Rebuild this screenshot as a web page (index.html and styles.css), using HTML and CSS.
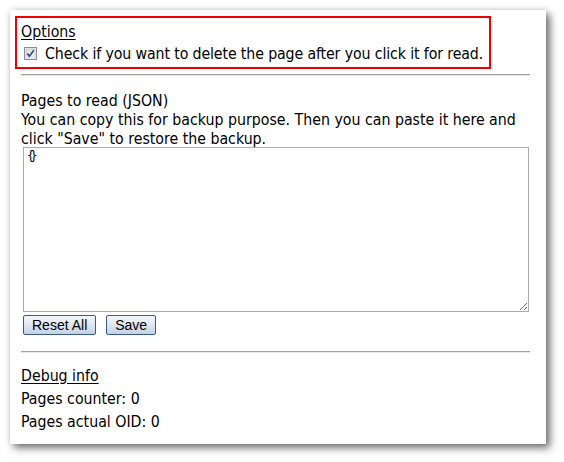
FILE: index.html
```html
<!DOCTYPE html>
<html>
<head>
<meta charset="utf-8">
<link rel="stylesheet" href="styles.css">
</head>
<body>
<div class="panel">
  <div class="options">
    <div class="title">Options</div>
    <label class="check-row">
      <svg class="cb" width="13" height="13" viewBox="0 0 13 13">
        <defs>
          <linearGradient id="cbg" x1="0" y1="0" x2="1" y2="1">
            <stop offset="0" stop-color="#d9dbdd"/>
            <stop offset="1" stop-color="#fbfbfb"/>
          </linearGradient>
        </defs>
        <rect x="0.5" y="0.5" width="12" height="12" fill="#f4f4f4" stroke="#8f8f8f"/>
        <rect x="2" y="2" width="9" height="9" fill="url(#cbg)" stroke="#b8bcc2" stroke-width="0.6"/>
        <path d="M3.3 6.4 L5.4 9.2 L9.8 3.2" fill="none" stroke="#2a4f9c" stroke-width="1.7" stroke-linejoin="round"/>
      </svg>
      <span class="check-text">Check if you want to delete the page after you click it for read.</span>
    </label>
  </div>
  <hr class="sep">
  <div class="pages">
    <div>Pages to read (JSON)</div>
    <div>You can copy this for backup purpose. Then you can paste it here and click "Save" to restore the backup.</div>
    <textarea class="json">{}</textarea>
    <div class="buttons">
      <button class="btn">Reset All</button>
      <button class="btn">Save</button>
    </div>
  </div>
  <hr class="sep sep2">
  <div class="debug">
    <div class="title">Debug info</div>
    <div>Pages counter: 0</div>
    <div>Pages actual OID: 0</div>
  </div>
</div>
</body>
</html>
```
FILE: styles.css
```css
html, body {
  margin: 0;
  padding: 0;
  background: #ffffff;
}
body {
  width: 564px;
  height: 462px;
  overflow: hidden;
}
.panel {
  box-sizing: border-box;
  margin: 10px 0 0 10px;
  width: 536px;
  height: 434px;
  background: #ffffff;
  box-shadow: 4px 4px 8px rgba(0, 0, 0, 0.55), 0 0 6px rgba(0, 0, 0, 0.12);
  padding: 12px 16px 0 11px;
  font-family: "DejaVu Sans Condensed", "DejaVu Sans", sans-serif;
  font-stretch: condensed;
  font-size: 15.75px;
  line-height: 19px;
  color: #000;
}
.options {
  width: 464px;
  outline: 2px solid #ee0000;
  outline-offset: 4px;
}
.title {
  text-decoration: underline;
  text-underline-offset: 2px;
}
.check-row {
  display: flex;
  align-items: center;
  margin-top: 3px;
  white-space: nowrap;
}
.check-text {
  letter-spacing: -0.12px;
}
.cb {
  margin: 0 8px 0 3px;
  flex: none;
}
.sep {
  margin: 11px 0 0 0;
  border: 0;
  height: 0;
  border-top: 1px solid #a0a0a0;
  border-bottom: 1px solid #e6e6e6;
}
.pages {
  margin-top: 15px;
}
.json {
  display: block;
  box-sizing: border-box;
  margin: -1px 0 0 2px;
  width: 506px;
  height: 165px;
  border: 1px solid #a5acb5;
  padding: 2px 3px;
  font-family: "DejaVu Sans Mono", monospace;
  font-size: 12px;
  letter-spacing: -4px;
  line-height: 13px;
  resize: both;
  outline: none;
}
.buttons {
  display: flex;
  gap: 10px;
  margin: 3px 0 0 2px;
}
.btn {
  box-sizing: border-box;
  height: 20px;
  padding: 0 8px;
  margin: 0;
  border: 1px solid #3c5a86;
  border-radius: 2px;
  background: linear-gradient(#f4f7fc, #dfe7f3 50%, #c3d0e4);
  font-family: "Liberation Sans", Arial, sans-serif;
  font-size: 14px;
  color: #000;
  line-height: 18px;
}
.sep2 {
  margin-top: 16px;
}
.debug {
  margin-top: 11px;
  line-height: 23px;
}
```
